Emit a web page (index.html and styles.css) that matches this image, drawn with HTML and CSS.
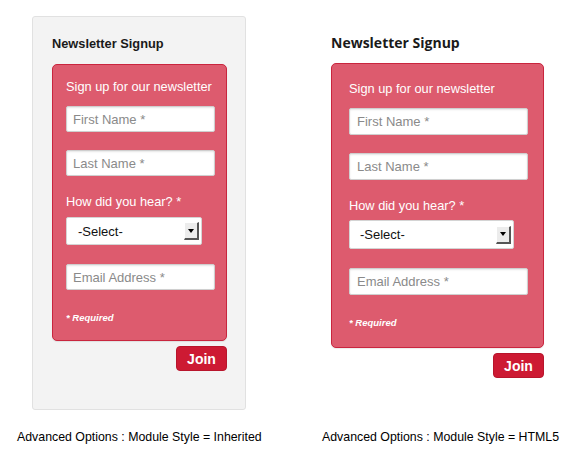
FILE: index.html
```html
<!DOCTYPE html>
<html lang="en">
<head>
  <meta charset="UTF-8" />
  <title>Newsletter Signup - Module Styles</title>
  <link rel="stylesheet" href="styles.css">
</head>
<body>
  <div class="page">
    <!-- Inherited module style -->
    <div class="col">
      <div class="well">
        <h3 class="module-title">Newsletter Signup</h3>
        <div class="signup">
          <div class="intro">Sign up for our newsletter</div>
          <input type="text" placeholder="First Name *">
          <input type="text" placeholder="Last Name *">
          <label>How did you hear? *</label>
          <div class="select">
            <span>-Select-</span>
            <span class="arrow"><i></i></span>
          </div>
          <input type="text" placeholder="Email Address *">
          <div class="required">* Required</div>
        </div>
        <div class="actions"><button>Join</button></div>
      </div>
    </div>

    <!-- HTML5 module style -->
    <div class="col col-html5">
      <div class="plain">
        <h3 class="module-title">Newsletter Signup</h3>
        <div class="signup">
          <div class="intro">Sign up for our newsletter</div>
          <input type="text" placeholder="First Name *">
          <input type="text" placeholder="Last Name *">
          <label>How did you hear? *</label>
          <div class="select">
            <span>-Select-</span>
            <span class="arrow"><i></i></span>
          </div>
          <input type="text" placeholder="Email Address *">
          <div class="required">* Required</div>
        </div>
        <div class="actions"><button>Join</button></div>
      </div>
    </div>

    <div class="caption">Advanced Options : Module Style = Inherited</div>
    <div class="caption">Advanced Options : Module Style = HTML5</div>
  </div>
</body>
</html>
```

FILE: styles.css
```css
body {
  margin: 0;
  background-color: #fff;
  font-family: "Liberation Sans", Arial, sans-serif;
  color: #222;
}

.page {
  display: grid;
  grid-template-columns: 305px 240px;
  padding: 16px 0 0 17px;
}

.col {
  padding-left: 15px;
}

.col-html5 {
  padding-left: 9px;
}

.well {
  width: 214px;
  height: 394px;
  box-sizing: border-box;
  background-color: #f3f3f3;
  border: 1px solid #e1e1e1;
  border-radius: 3px;
  padding: 19px 19px 0 19px;
}

.module-title {
  margin: 0 0 12px;
  font-size: 12.8px;
  line-height: 16px;
  font-weight: bold;
  color: #1a1a1a;
}

.plain .module-title {
  font-family: "Open Sans", sans-serif;
  font-size: 14px;
  line-height: 20px;
  margin: 17px 0 10px;
}

.signup {
  background-color: #dd5b6e;
  border: 1px solid #c9253e;
  border-radius: 5px;
  box-sizing: border-box;
  width: 175px;
  padding: 14px 11px 16px 13px;
  display: flex;
  flex-direction: column;
  align-items: flex-start;
  box-shadow: 0 1px 1px rgba(0, 0, 0, 0.08);
}

.plain .signup {
  width: 213px;
  padding: 17px 15px 18px 17px;
}

.intro,
.signup label {
  color: #fff;
  font-size: 12.8px;
  line-height: 16px;
}

.intro {
  margin-bottom: 11px;
}

.signup input {
  width: 149px;
  height: 26px;
  box-sizing: border-box;
  margin: 0 0 18px;
  padding: 0 6px;
  border: 1px solid #cfcfcf;
  border-radius: 2px;
  background-color: #fff;
  font-family: "Liberation Sans", Arial, sans-serif;
  font-size: 13px;
  box-shadow: inset 0 1px 2px rgba(0, 0, 0, 0.1);
}

.signup input::placeholder {
  color: #8a8a8a;
}

.plain .signup input {
  width: 179px;
  height: 27px;
  margin-bottom: 18px;
  padding: 0 7px;
}

.signup label {
  margin-bottom: 7px;
}

.plain .signup label {
  margin-bottom: 6px;
}

.select {
  width: 136px;
  height: 28px;
  box-sizing: border-box;
  display: flex;
  align-items: center;
  justify-content: space-between;
  background-color: #fff;
  border: 1px solid #d4d4d4;
  border-radius: 2px;
  padding: 0 2px 0 11px;
  margin-bottom: 19px;
  font-size: 13px;
  color: #111;
}

.plain .select {
  width: 165px;
  height: 29px;
  padding-left: 10px;
}

.arrow {
  width: 15px;
  height: 18px;
  box-sizing: border-box;
  background-color: #ececec;
  border-top: 1px solid #fff;
  border-left: 1px solid #fff;
  border-right: 2px solid #555;
  border-bottom: 2px solid #555;
  display: flex;
  align-items: center;
  justify-content: center;
}

.arrow i {
  width: 0;
  height: 0;
  border-left: 3px solid transparent;
  border-right: 3px solid transparent;
  border-top: 4px solid #000;
}

.required {
  margin-top: 3px;
  color: #fff;
  font-size: 9.5px;
  font-weight: bold;
  font-style: italic;
  line-height: 12px;
}

.signup input:last-of-type {
  margin-bottom: 19px;
}

.actions {
  display: flex;
  justify-content: flex-end;
  width: 175px;
  margin-top: 5px;
}

.plain .actions {
  width: 213px;
}

.actions button {
  width: 51px;
  height: 25px;
  background-color: #cd1a33;
  color: #fff;
  border: 1px solid #b8152c;
  border-radius: 4px;
  font-family: "Liberation Sans", Arial, sans-serif;
  font-size: 14px;
  font-weight: bold;
  padding: 0;
}

.caption {
  margin-top: 20px;
  font-size: 12.35px;
  color: #000;
}
```
